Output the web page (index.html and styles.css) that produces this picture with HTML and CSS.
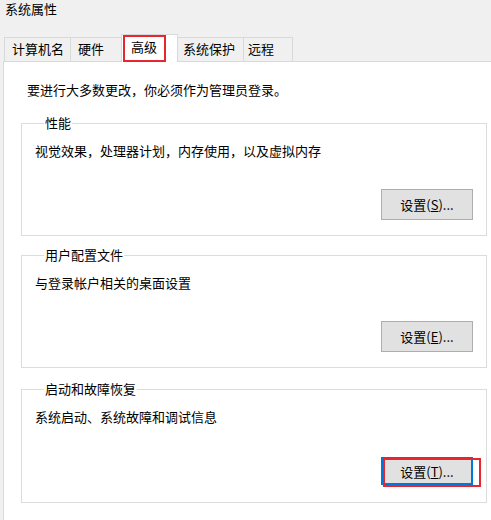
FILE: index.html
```html
<!DOCTYPE html>
<html lang="zh-CN">
<head>
<meta charset="utf-8">
<title>系统属性</title>
<link rel="stylesheet" href="styles.css">
</head>
<body>
<div class="window">
  <div class="title">系统属性</div>
  <div class="tabs">
    <div class="tab tab-name">计算机名</div>
    <div class="tab tab-hw">硬件</div>
    <div class="tab tab-adv selected">高级<span class="mark mark-tab"></span></div>
    <div class="tab tab-prot">系统保护</div>
    <div class="tab tab-remote">远程</div>
  </div>
  <div class="panel">
    <p class="intro">要进行大多数更改，你必须作为管理员登录。</p>

    <fieldset class="group">
      <legend>性能</legend>
      <p class="desc">视觉效果，处理器计划，内存使用，以及虚拟内存</p>
      <div class="actions"><button class="btn">设置(<u>S</u>)...</button></div>
    </fieldset>

    <fieldset class="group group-profile">
      <legend>用户配置文件</legend>
      <p class="desc">与登录帐户相关的桌面设置</p>
      <div class="actions"><button class="btn">设置(<u>E</u>)...</button></div>
    </fieldset>

    <fieldset class="group group-startup">
      <legend>启动和故障恢复</legend>
      <p class="desc">系统启动、系统故障和调试信息</p>
      <div class="actions"><button class="btn focused">设置(<u>T</u>)...<span class="mark mark-btn"></span></button></div>
    </fieldset>
  </div>
</div>
</body>
</html>
```

FILE: styles.css
```css
html, body {
  margin: 0;
  padding: 0;
}
body {
  width: 491px;
  height: 520px;
  overflow: hidden;
  background: #f0f0f0;
  font-family: "Noto Sans CJK SC", "Microsoft YaHei", sans-serif;
  font-size: 13px;
  color: #000;
}
.window {
  display: flex;
  flex-direction: column;
  height: 520px;
}
.title {
  height: 34px;
  box-sizing: border-box;
  padding: 1px 0 0 5px;
  line-height: 16px;
}
.tabs {
  display: flex;
  align-items: flex-end;
  height: 27px;
  padding-left: 4px;
}
.tab {
  position: relative;
  box-sizing: border-box;
  height: 24px;
  line-height: 22px;
  border: 1px solid #d9d9d9;
  border-bottom: none;
  background: #f0f0f0;
  padding-left: 7px;
  white-space: nowrap;
}
.tab + .tab { margin-left: -1px; }
.tab-name { width: 67px; }
.tab-hw { width: 52px; }
.tab-adv { width: 57px; padding-left: 9px; }
.tab-prot { width: 67px; padding-left: 5px; }
.tab-remote { width: 50px; padding-left: 4px; }
.tab.selected {
  z-index: 2;
  height: 28px;
  margin-bottom: -1px;
  line-height: 24px;
  background: #fff;
}
.mark {
  position: absolute;
  box-sizing: border-box;
  border: 2px solid #e8262d;
  pointer-events: none;
}
.mark-tab {
  left: 1px;
  top: 0;
  width: 43px;
  height: 27px;
}
.panel {
  position: relative;
  z-index: 1;
  flex: 1;
  min-height: 0;
  margin-left: 3px;
  margin-right: -20px;
  background: #fff;
  border: 1px solid #d9d9d9;
  border-bottom: none;
  padding: 20px 0 0 17px;
  box-sizing: border-box;
}
.intro {
  margin: 0 0 18px 6px;
  line-height: 16px;
}
.group {
  width: 466px;
  box-sizing: border-box;
  margin: 0;
  padding: 13px 13px 15px 13px;
  border: 1px solid #dcdcdc;
  min-width: 0;
}
.group legend {
  margin-left: 9px;
  padding: 0 1px;
  line-height: 14px;
}
.group-profile { margin-top: 12px; }
.group-startup { margin-top: 14px; padding-bottom: 17px; }
.desc {
  margin: 0;
  line-height: 16px;
}
.actions {
  display: flex;
  justify-content: flex-end;
  margin-top: 30px;
}
.group-startup .actions { margin-top: 32px; }
.btn {
  position: relative;
  box-sizing: border-box;
  width: 92px;
  height: 31px;
  padding: 0;
  background: #e1e1e1;
  border: 1px solid #adadad;
  border-radius: 0;
  font-family: inherit;
  font-size: 13px;
  color: #000;
}
.btn u { text-decoration: underline; }
.btn.focused {
  height: 28px;
  border: 2px solid #0078d7;
}
.mark-btn {
  left: 0;
  top: -1px;
  width: 98px;
  height: 29px;
}
```
